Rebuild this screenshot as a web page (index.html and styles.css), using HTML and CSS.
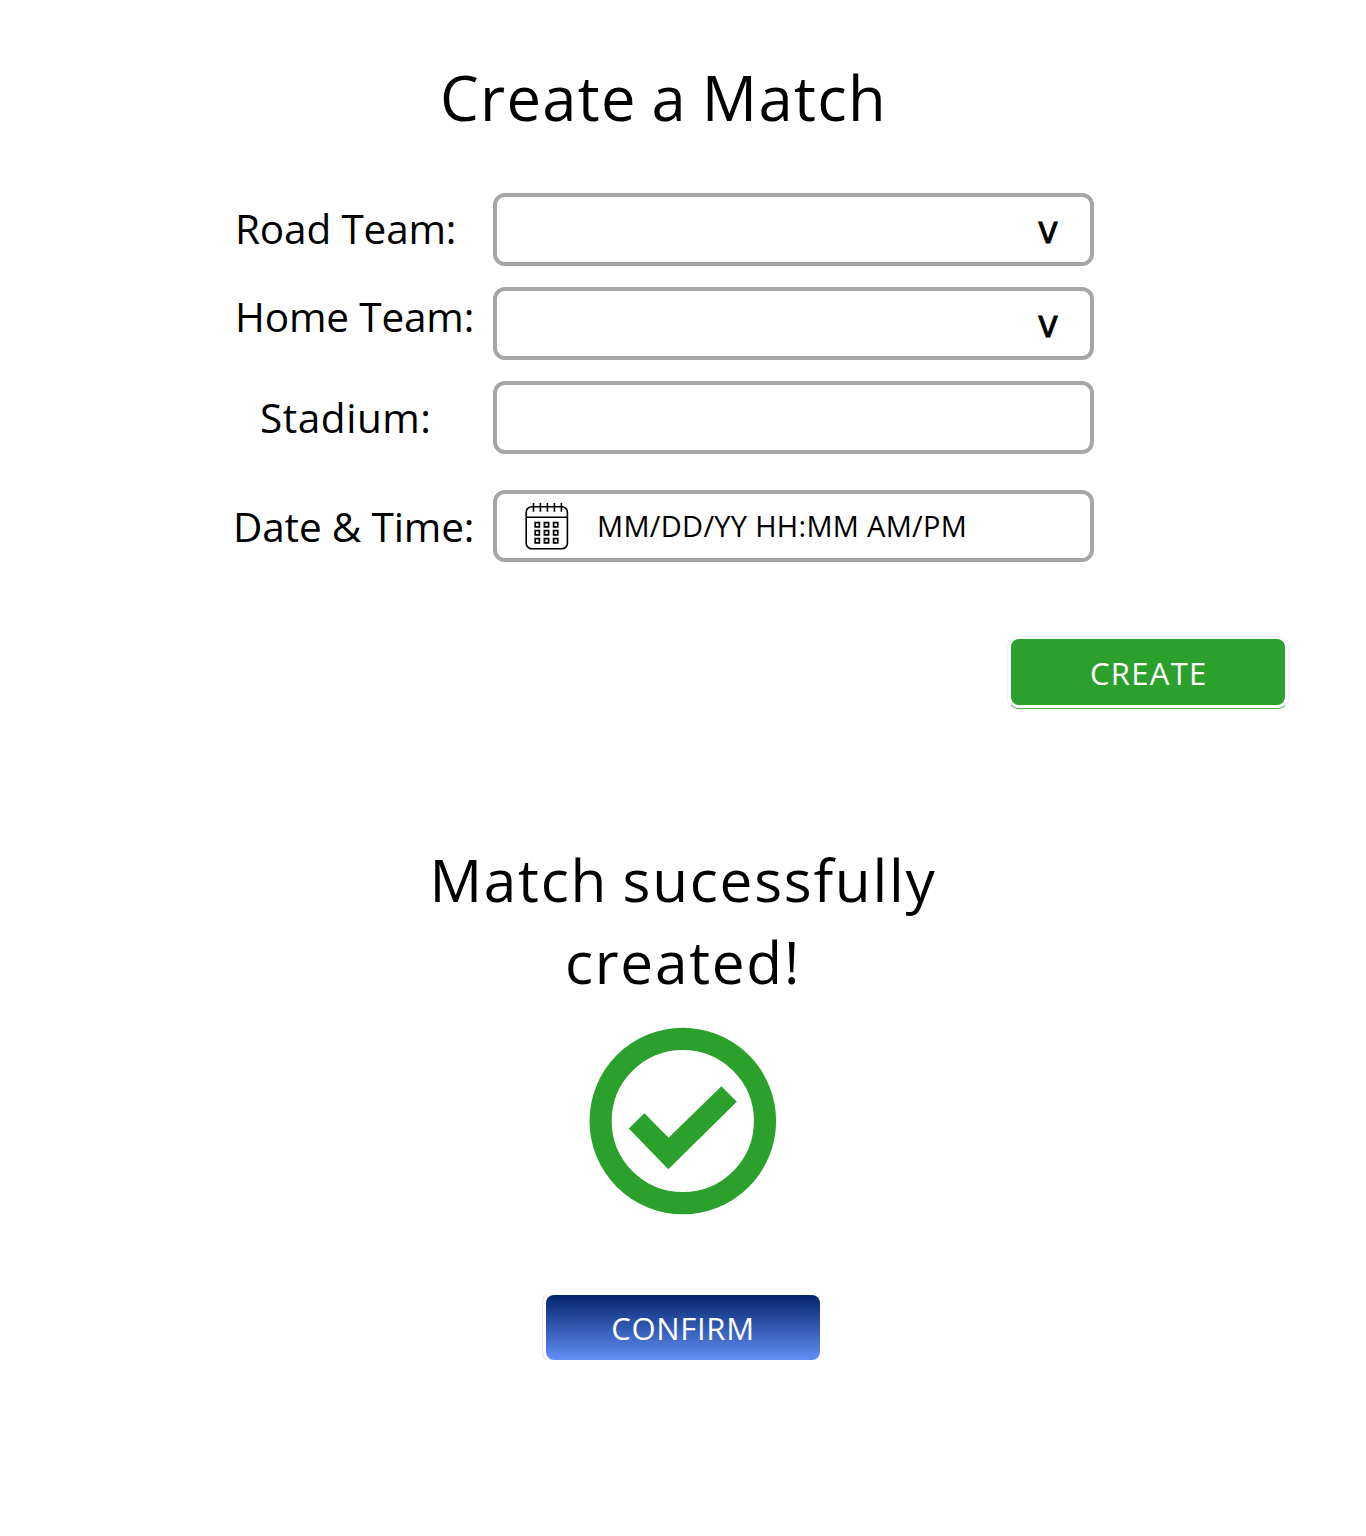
FILE: index.html
```html
<!DOCTYPE html>
<html lang="en">
<head>
<meta charset="utf-8">
<title>Create a Match</title>
<link rel="stylesheet" href="styles.css">
</head>
<body>
<main class="page">
  <h1 class="title"><span>Create a Match</span></h1>
  <form class="form">
    <div class="row">
      <label class="label road"><span>Road Team:</span></label>
      <div class="field select"><span class="caret">v</span></div>
    </div>
    <div class="row">
      <label class="label home"><span>Home Team:</span></label>
      <div class="field select"><span class="caret">v</span></div>
    </div>
    <div class="row">
      <label class="label stadium"><span>Stadium:</span></label>
      <div class="field"></div>
    </div>
    <div class="row row-date">
      <label class="label date"><span>Date &amp; Time:</span></label>
      <div class="field picker">
        <svg class="calendar" width="44" height="48" viewBox="525 502 44 48" fill="none" stroke="#000" stroke-width="1.6">
          <rect x="526.2" y="506.7" width="41.2" height="42" rx="5.5"/>
          <path d="M526 517.2h41.5"/>
          <path d="M533.5 503v8.7M540.4 503v8.7M547.4 503v8.7M554.4 503v8.7M561.4 503v8.7"/>
          <path stroke-width="1.7" d="M535.2 522.6h4.2v4.2h-4.2zM544.4 522.6h4.2v4.2h-4.2zM553.6 522.6h4.2v4.2h-4.2zM535.2 530.6h4.2v4.2h-4.2zM544.4 530.6h4.2v4.2h-4.2zM553.6 530.6h4.2v4.2h-4.2zM535.2 538.6h4.2v4.2h-4.2zM544.4 538.6h4.2v4.2h-4.2zM553.6 538.6h4.2v4.2h-4.2z"/>
        </svg>
        <span class="placeholder">MM/DD/YY HH:MM AM/PM</span>
      </div>
    </div>
    <div class="actions">
      <button type="button" class="button create"><span>CREATE</span></button>
    </div>
  </form>
  <section class="success">
    <h2 class="message"><span class="line1">Match sucessfully</span><br><span class="line2">created!</span></h2>
    <svg class="check" width="188" height="188" viewBox="589 1027 188 188">
      <circle cx="682.8" cy="1121" r="82.2" fill="none" stroke="#2ca02c" stroke-width="22.2"/>
      <path fill="#2ca02c" d="M628.8 1128.6L644.4 1113.2L668.6 1137.8L721.4 1086.2L736.8 1101.7L668.3 1169.2z"/>
    </svg>
    <button type="button" class="button confirm"><span>CONFIRM</span></button>
  </section>
</main>
</body>
</html>
```
FILE: styles.css
```css
* { box-sizing: border-box; }

body {
  margin: 0;
  background: #fff;
  color: #000;
  font-family: "Open Sans", "Noto Sans", sans-serif;
}

.page {
  width: 1366px;
  height: 1536px;
  padding-top: 56px;
}

.title {
  margin: 0;
  padding-left: 440px;
  height: 82px;
  line-height: 82px;
  font-size: 61.5px;
  font-weight: 400;
  letter-spacing: 1.3px;
  word-spacing: -2.5px;
  white-space: nowrap;
}

.form {
  display: flex;
  flex-direction: column;
  gap: 21px;
  padding-top: 55px;
}

.row {
  display: grid;
  grid-template-columns: 493px 601px;
  height: 73px;
  align-items: center;
}

.row-date { margin-top: 15px; }

.label {
  font-size: 40.5px;
  line-height: 56px;
  padding-left: 235px;
  letter-spacing: -0.15px;
  white-space: nowrap;
}

.road { padding-bottom: 1px; }
.home { padding-bottom: 13px; }
.stadium { padding-left: 260px; letter-spacing: 0.55px; }
.date { padding-left: 233px; }

.field {
  height: 73px;
  border: 4px solid #a6a6a6;
  border-radius: 12px;
  display: flex;
  align-items: center;
}

.row-date .field { height: 72px; align-self: start; }

.select {
  justify-content: flex-end;
  padding-right: 32.5px;
}

.caret {
  font-size: 38px;
  line-height: 40px;
  padding-bottom: 3px;
  -webkit-text-stroke: 0.9px #000;
}

.picker {
  padding-left: 28px;
  gap: 28px;
}

.calendar { margin-bottom: 1px; }

.placeholder {
  font-size: 29px;
  line-height: 40px;
  letter-spacing: 0.3px;
  white-space: nowrap;
}

.actions {
  display: flex;
  justify-content: flex-end;
  padding: 52px 77px 0 0;
}

.button {
  display: block;
  width: 282px;
  height: 73px;
  padding: 2px 3px 4px;
  background: #fff;
  border: 1px solid #edf6ed;
  border-radius: 12px;
  font: 400 31px/68px "Open Sans", "Noto Sans", sans-serif;
  color: #fff;
}

.button span {
  display: block;
  height: 66px;
  border-radius: 8px;
}

.create {
  border-bottom-color: #5bb55b;
  letter-spacing: 1.3px;
}

.create span {
  padding-left: 1.5px;
  background: #2ca02c;
}

.confirm {
  padding-top: 3px;
  border-color: #fff #fff #fff #dfe5f4;
  letter-spacing: 0.7px;
  line-height: 67px;
}

.confirm span {
  height: 65px;
  background: linear-gradient(#04246c, #628ff6);
}

.success {
  display: flex;
  flex-direction: column;
  align-items: center;
  padding-top: 129px;
}

.message {
  margin: 0;
  font-size: 58.5px;
  line-height: 82px;
  font-weight: 400;
  letter-spacing: 1.75px;
  word-spacing: -2.5px;
  text-align: center;
  white-space: nowrap;
}

.check { margin-top: 25px; }
.confirm { margin-top: 76px; }
```
